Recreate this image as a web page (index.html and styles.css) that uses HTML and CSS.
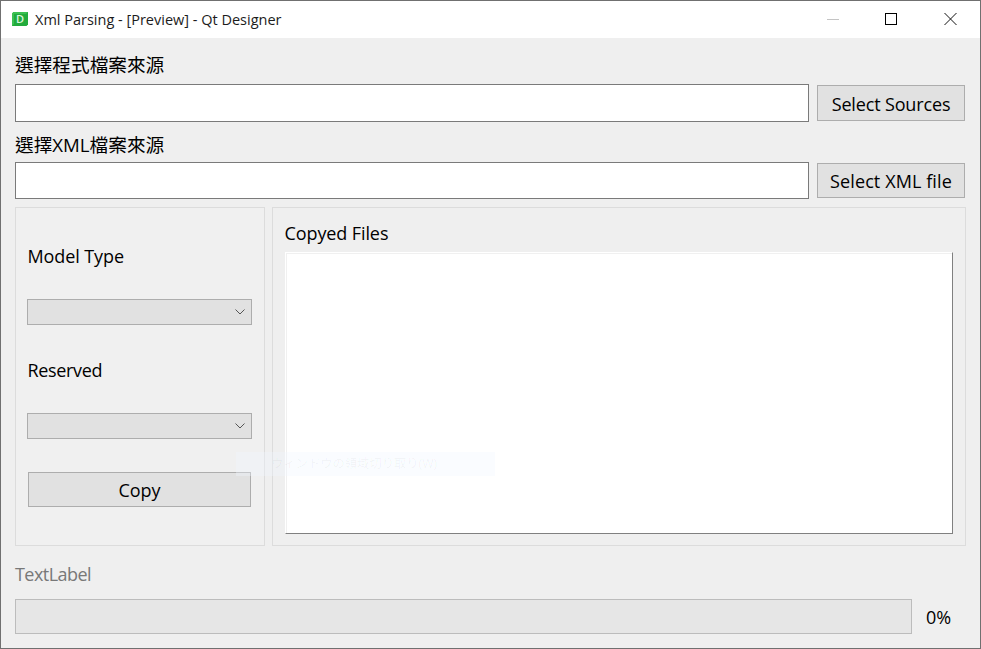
FILE: index.html
```html
<!DOCTYPE html>
<html lang="zh-Hant">
<head>
<meta charset="utf-8">
<title>Xml Parsing - [Preview] - Qt Designer</title>
<link rel="stylesheet" href="styles.css">
</head>
<body>
<div class="window">
  <header class="titlebar">
    <svg class="app-icon" width="16" height="14" viewBox="0 0 16 14"><path d="M0 1.500 1.500 0H16V12.500L14.500 14H0Z" fill="#22ab3c"/><path d="M0 1.500 1.500 0H16L14 2H2V12L0 14Z" fill="#3cc052"/><text x="8" y="11" text-anchor="middle" class="icon-letter">D</text></svg>
    <span class="title-text">Xml Parsing - [Preview] - Qt Designer</span>
    <div class="controls">
      <svg class="ctl" width="58" height="14" viewBox="0 0 58 14"><path d="M0 7.500H12" stroke="#c4c4c4" fill="none"/></svg>
      <svg class="ctl" width="59" height="14" viewBox="0 0 59 14"><rect x="0.500" y="1.500" width="11" height="11" stroke="#000" fill="none"/></svg>
      <svg class="ctl" width="13" height="14" viewBox="0 0 13 14"><path d="M0.500 1 12.500 13M12.500 1 0.500 13" stroke="#111" fill="none"/></svg>
    </div>
  </header>
  <main class="content">
    <label class="cap cap-1">選擇程式檔案來源</label>
    <div class="file-row row-1">
      <input class="field" type="text">
      <button class="btn side-btn" type="button">Select Sources</button>
    </div>
    <label class="cap cap-2">選擇XML檔案來源</label>
    <div class="file-row row-2">
      <input class="field" type="text">
      <button class="btn side-btn" type="button">Select XML file</button>
    </div>
    <div class="panels">
      <section class="panel left">
        <div class="lbl lbl-model">Model Type</div>
        <div class="combo"><svg width="10" height="6" viewBox="0 0 10 6"><path d="M0.500 0.500 5 5 9.500 0.500" stroke="#555" fill="none"/></svg></div>
        <div class="lbl lbl-reserved">Reserved</div>
        <div class="combo"><svg width="10" height="6" viewBox="0 0 10 6"><path d="M0.500 0.500 5 5 9.500 0.500" stroke="#555" fill="none"/></svg></div>
        <button class="btn copy" type="button">Copy</button>
      </section>
      <section class="panel right">
        <div class="lbl lbl-copied">Copyed Files</div>
        <div class="list"></div>
      </section>
    </div>
    <div class="status">TextLabel</div>
    <div class="progress-row">
      <div class="progress"></div>
      <span class="pct">0%</span>
    </div>
  </main>
  <div class="ghost">ウィンドウの領域切り取り(W)</div>
</div>
</body>
</html>
```

FILE: styles.css
```css
* { box-sizing: border-box; }
html, body { margin: 0; padding: 0; }
body {
  width: 981px;
  height: 649px;
  overflow: hidden;
  font-family: "Open Sans", "Noto Sans CJK TC", sans-serif;
  font-size: 18px;
  color: #000;
}
.window {
  position: relative;
  width: 981px;
  height: 649px;
  border: 1px solid #707070;
  background: #efefef;
  display: flex;
  flex-direction: column;
}
.titlebar {
  height: 37px;
  flex: none;
  background: #fff;
  display: flex;
  align-items: center;
  padding-left: 11px;
  font-size: 14.5px;
}
.app-icon { flex: none; margin-top: -1px; }
.icon-letter { font: 600 11px "Open Sans", sans-serif; fill: #d8f5dc; }
.title-text { margin-left: 7px; color: #1c1c1c; line-height: 19px; margin-top: -1px; }
.controls { margin-left: auto; display: flex; align-items: center; margin-right: 23px; margin-top: -1px; }
.ctl { display: block; flex: none; }
.content {
  flex: 1;
  display: flex;
  flex-direction: column;
  padding: 0 14px;
}
.cap { height: 24px; line-height: 24px; display: block; white-space: nowrap; font-size: 18.67px; }
.cap-1 { margin-top: 15px; margin-bottom: 7px; }
.cap-2 { margin-top: 11px; margin-bottom: 5px; }
.file-row { display: flex; gap: 8px; align-items: center; }
.row-1 { height: 38px; }
.row-2 { height: 37px; }
.field {
  width: 794px;
  height: 100%;
  background: #fff;
  border: 1px solid #7a7a7a;
  padding: 0;
  outline: none;
  flex: none;
}
.btn {
  background: #e1e1e1;
  border: 1px solid #adadad;
  padding: 0;
  font: inherit;
  color: #000;
}
.side-btn { width: 148px; flex: none; }
.row-1 .side-btn { height: 36px; padding-top: 2px; letter-spacing: -0.15px; }
.row-2 .side-btn { height: 35px; letter-spacing: 0.1px; }
.panels {
  display: flex;
  gap: 7px;
  margin-top: 8px;
  height: 339px;
  flex: none;
}
.panel { border: 1px solid #dcdcdc; background: #f0f0f0; }
.panel.left {
  width: 250px;
  padding: 0 11px;
  display: flex;
  flex-direction: column;
}
.panel.right {
  width: 694px;
  padding: 0 12px;
  display: flex;
  flex-direction: column;
  background: #efefef;
}
.lbl { height: 24px; line-height: 24px; white-space: nowrap; }
.left .lbl { padding-left: 0.500px; }
.lbl-model { margin-top: 36px; margin-bottom: 31px; letter-spacing: -0.1px; }
.lbl-reserved { margin-top: 33px; margin-bottom: 31px; letter-spacing: -0.35px; }
.combo {
  height: 26px;
  width: 225px;
  background: #e1e1e1;
  border: 1px solid #adadad;
  display: flex;
  align-items: center;
  justify-content: flex-end;
  padding-right: 6px;
  flex: none;
}
.combo svg { display: block; }
.copy { width: 223px; height: 35px; margin: 33px 0 0 1px; flex: none; }
.lbl-copied { margin-top: 13px; margin-bottom: 7px; letter-spacing: -0.1px; margin-left: -0.500px; }
.list {
  width: 668px;
  height: 282px;
  background: #fff;
  border: 1px solid;
  border-color: #fff #808080 #808080 #fff;
  box-shadow: inset 1px 1px 0 #f0f0f0;
  flex: none;
}
.status { height: 24px; line-height: 24px; color: #787878; margin-top: 16px; letter-spacing: -0.55px; }
.progress-row { display: flex; align-items: center; margin-top: 13px; }
.progress {
  width: 897px;
  height: 35px;
  background: #e6e6e6;
  border: 1px solid #bcbcbc;
  flex: none;
}
.pct { margin-left: 14px; line-height: 24px; }
.ghost {
  position: absolute;
  left: 235px;
  top: 451px;
  width: 259px;
  height: 24px;
  padding-left: 35px;
  font-size: 12.3px;
  line-height: 24px;
  color: rgba(0, 0, 0, 0.045);
  background: rgba(240, 246, 255, 0.35);
  white-space: nowrap;
}
```
